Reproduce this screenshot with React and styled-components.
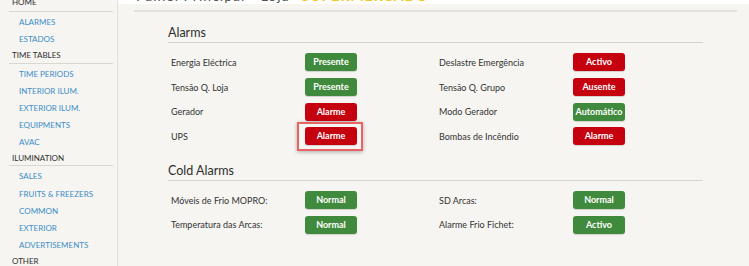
import React from "react";
import styled, { createGlobalStyle, css } from "styled-components";

const GlobalStyle = createGlobalStyle`
    html, body {
        margin: 0;
        padding: 0;
        background: #f6f5f1;
        overflow: hidden;
    }
    body {
        font-family: Lato, "Open Sans", sans-serif;
        color: #333;
    }
`;

const Page = styled.div`
    display: flex;
    width: 749px;
    height: 266px;
    overflow: hidden;
`;

const Sidebar = styled.nav`
    width: 104px;
    flex-shrink: 0;
    padding: 0 4px 0 9px;
    margin-top: -4px;
    border-right: 1px solid #e1dfda;
`;

const MenuHeading = styled.div`
    box-sizing: border-box;
    height: 16.15px;
    line-height: ${props => props.top ? "12px" : "17px"};
    padding-left: 3px;
    margin-bottom: 1px;
    font-size: 8px;
    text-transform: uppercase;
    color: #2f2f2f;
    border-bottom: 1px solid #d9d7d2;
`;

const MenuLink = styled.a`
    display: block;
    height: 17.15px;
    line-height: 19px;
    padding-left: 10px;
    font-size: 8px;
    text-transform: uppercase;
    color: #3b8dc8;
    text-decoration: none;
`;

const Main = styled.main`
    flex: 1;
    display: flex;
    flex-direction: column;
`;

const TitleBar = styled.div`
    height: 4px;
    flex-shrink: 0;
    background: #fff;
    overflow: hidden;
    display: flex;
    align-items: flex-end;
    gap: 12px;
    padding-left: 18px;
`;

const TitleText = styled.span`
    font-size: 14px;
    line-height: 17px;
    color: ${props => props.highlight ? "#f2c624" : "#555"};
    font-weight: ${props => props.highlight ? 700 : 400};
    letter-spacing: 1px;
`;

const Divider = styled.div`
    height: 2px;
    margin: 6px 12px 0 16px;
    background: #e3e1dc;
`;

const Section = styled.section`
    width: 535px;
    margin-left: 50px;
    margin-top: ${props => props.first ? "12px" : "13px"};
`;

const SectionTitle = styled.h3`
    margin: 0;
    height: 18px;
    line-height: 18px;
    font-size: 12.5px;
    font-weight: 400;
    color: #2d2d2d;
    border-bottom: 1px solid #d6d4cf;
`;

const Grid = styled.div`
    display: grid;
    grid-template-columns: 137px 52px 79px 137px 52px;
    grid-auto-rows: 24.7px;
    align-items: center;
    margin-top: 7px;
`;

const Label = styled.div`
    padding-left: 3px;
    font-size: 9px;
    color: #333;
    white-space: nowrap;
`;

const Spacer = styled.div``;

const Cell = styled.div`
    position: relative;
    height: 18px;
`;

const Status = styled.div`
    width: 52px;
    height: 18px;
    line-height: 18px;
    border-radius: 3px;
    text-align: center;
    font-size: 9px;
    font-weight: 700;
    color: #fff;
    box-shadow: 0 1px 1px rgba(0, 0, 0, 0.15);
    ${props => props.tone === "ok" ? css`
        background: #3f8a3d;
    ` : css`
        background: #c5000f;
    `}
`;

const Focus = styled.div`
    position: absolute;
    left: -8px;
    top: -5px;
    right: -6px;
    bottom: -6px;
    border: 2px solid #e86363;
    box-shadow: 0 1px 4px rgba(0, 0, 0, 0.3);
    pointer-events: none;
`;

const menu = [
    { title: "Home", links: ["Alarmes", "Estados"] },
    { title: "Time Tables", links: ["Time Periods", "Interior Ilum.", "Exterior Ilum.", "Equipments", "AVAC"] },
    { title: "Ilumination", links: ["Sales", "Fruits & Freezers", "Common", "Exterior", "Advertisements"] },
    { title: "Other", links: [] },
];

const alarms = [
    [["Energia Eléctrica", "Presente", "ok"], ["Deslastre Emergência", "Activo", "bad"]],
    [["Tensão Q. Loja", "Presente", "ok"], ["Tensão Q. Grupo", "Ausente", "bad"]],
    [["Gerador", "Alarme", "bad"], ["Modo Gerador", "Automático", "ok"]],
    [["UPS", "Alarme", "bad", true], ["Bombas de Incêndio", "Alarme", "bad"]],
];

const coldAlarms = [
    [["Móveis de Frio MOPRO:", "Normal", "ok"], ["SD Arcas:", "Normal", "ok"]],
    [["Temperatura das Arcas:", "Normal", "ok"], ["Alarme Frio Fichet:", "Activo", "ok"]],
];

const StatusGrid = ({ rows }) => (
    <Grid>
        {rows.map((row, i) => (
            <React.Fragment key={i}>
                <Label>{row[0][0]}</Label>
                <Cell>
                    <Status tone={row[0][2]}>{row[0][1]}</Status>
                    {row[0][3] && <Focus />}
                </Cell>
                <Spacer />
                <Label>{row[1][0]}</Label>
                <Cell>
                    <Status tone={row[1][2]}>{row[1][1]}</Status>
                </Cell>
            </React.Fragment>
        ))}
    </Grid>
);

const App = () => {
    return (
        <Page>
            <GlobalStyle />
            <Sidebar>
                {menu.map((group, i) => (
                    <React.Fragment key={group.title}>
                        <MenuHeading top={i === 0}>{group.title}</MenuHeading>
                        {group.links.map(l => <MenuLink key={l} href="#">{l}</MenuLink>)}
                    </React.Fragment>
                ))}
            </Sidebar>
            <Main>
                <TitleBar>
                    <TitleText>Painel Principal - Loja</TitleText>
                    <TitleText highlight>SUPERMERCADO</TitleText>
                </TitleBar>
                <Divider />
                <Section first>
                    <SectionTitle>Alarms</SectionTitle>
                    <StatusGrid rows={alarms} />
                </Section>
                <Section>
                    <SectionTitle>Cold Alarms</SectionTitle>
                    <StatusGrid rows={coldAlarms} />
                </Section>
            </Main>
        </Page>
    );
};

export default App;
